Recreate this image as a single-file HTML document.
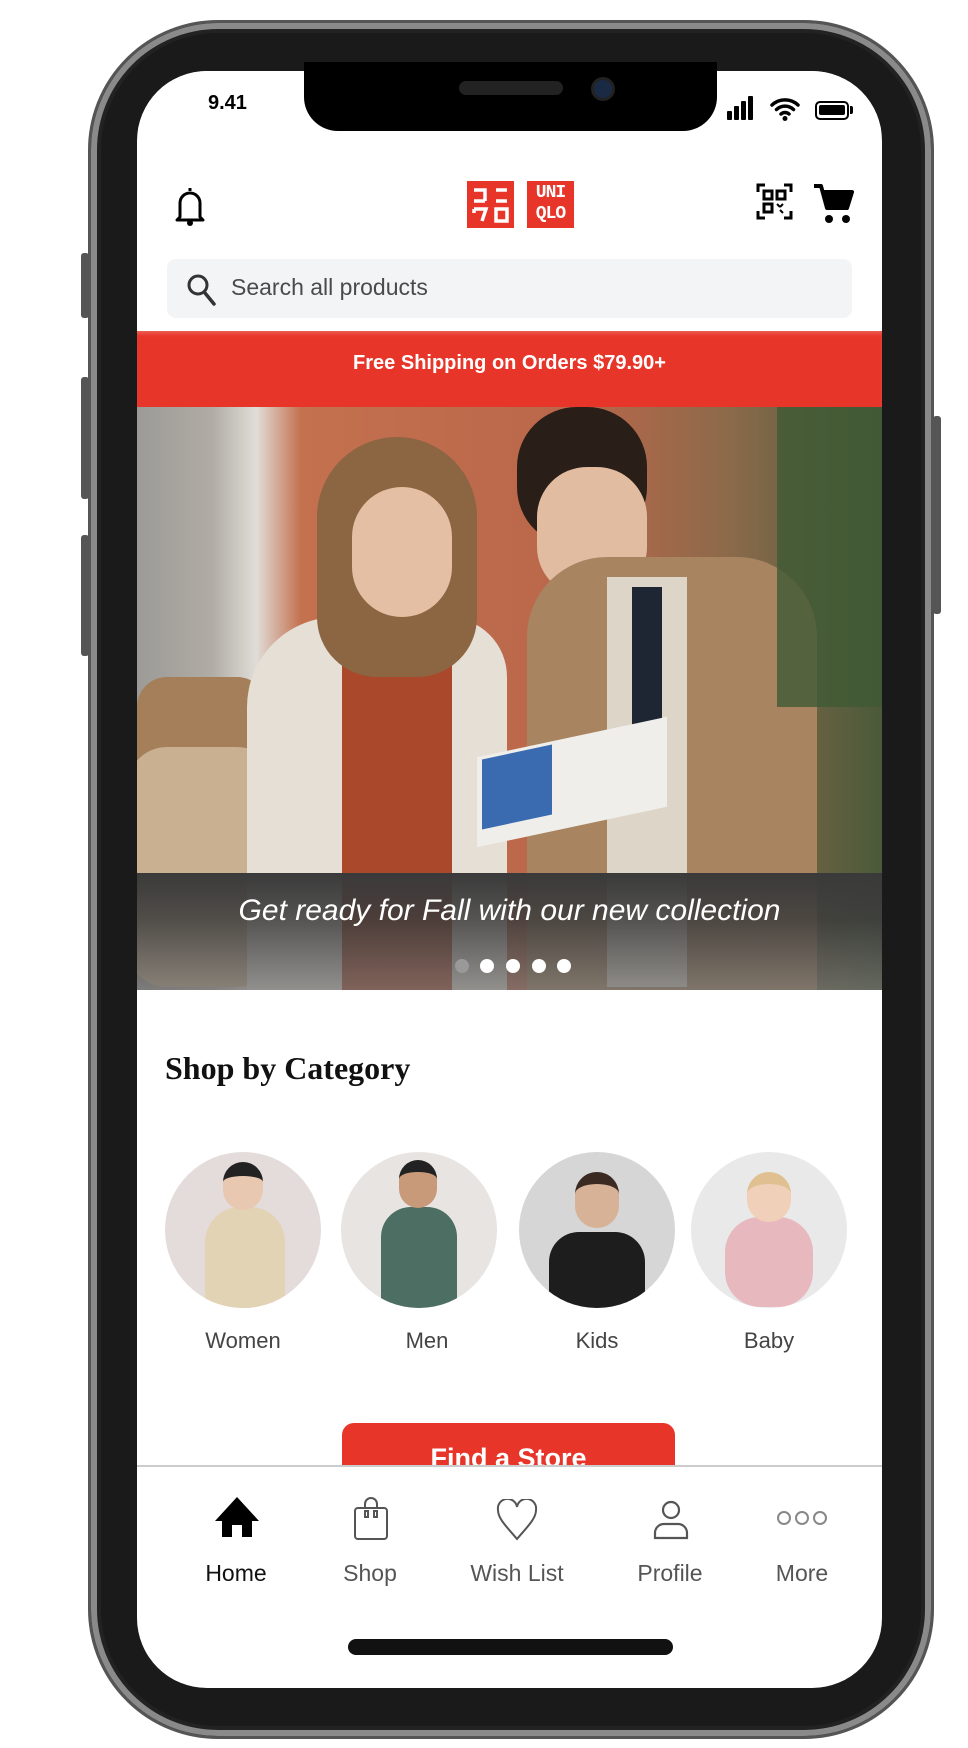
<!DOCTYPE html>
<html><head><meta charset="utf-8"><style>
*{margin:0;padding:0;box-sizing:border-box}
body{width:968px;height:1748px;background:#fff;position:relative;overflow:hidden;font-family:"Liberation Sans",sans-serif}
.abs{position:absolute}
.phone{left:88px;top:20px;width:846px;height:1719px;border-radius:130px;background:#1a1a1a;border:3px solid #555;box-shadow:inset 0 0 0 6px #8a8a8a,inset 0 0 0 10px #222}
.screen{left:137px;top:71px;width:745px;height:1617px;border-radius:70px;background:#fff;overflow:hidden}
.btn{background:#555;border-radius:3px}
.notch{left:304px;top:62px;width:413px;height:69px;background:#000;border-radius:0 0 34px 34px}
.hero{left:137px;top:407px;width:745px;height:583px;overflow:hidden;background:#b9644a}
.cat{position:absolute;top:1152px;width:156px;height:156px;border-radius:50%;overflow:hidden;background:#e4e2e2}
.lab{position:absolute;top:1328px;font-size:22px;color:#444;width:160px;text-align:center}
.nav{position:absolute;top:1560px;font-size:23px;color:#555;width:140px;text-align:center}
</style></head><body>
<div class="abs btn" style="left:81px;top:253px;width:8px;height:65px"></div>
<div class="abs btn" style="left:81px;top:377px;width:8px;height:122px"></div>
<div class="abs btn" style="left:81px;top:535px;width:8px;height:121px"></div>
<div class="abs btn" style="left:933px;top:416px;width:8px;height:198px"></div>
<div class="abs phone"></div>
<div class="abs screen">
  <div class="abs" style="left:0;top:0;width:745px;height:60px;background:#fff"></div>
</div>
<div class="abs notch"></div>
<div class="abs" style="left:459px;top:81px;width:104px;height:14px;border-radius:7px;background:#222"></div>
<div class="abs" style="left:591px;top:77px;width:24px;height:24px;border-radius:50%;background:#1b2a44;border:3px solid #222"></div>
<div class="abs" style="left:208px;top:92px;font-size:20px;font-weight:bold">9.41</div>
<div class="abs" style="left:727px;top:111px;width:5px;height:9px;background:#000;border-radius:1px"></div>
<div class="abs" style="left:734px;top:106px;width:5px;height:14px;background:#000;border-radius:1px"></div>
<div class="abs" style="left:741px;top:101px;width:5px;height:19px;background:#000;border-radius:1px"></div>
<div class="abs" style="left:748px;top:96px;width:5px;height:24px;background:#000;border-radius:1px"></div>
<svg class="abs" style="left:770px;top:96px" width="30" height="26" viewBox="0 0 30 26"><path d="M2 9a19 19 0 0 1 26 0M6.5 13.5a12.5 12.5 0 0 1 17 0M11 18a6 6 0 0 1 8 0" fill="none" stroke="#000" stroke-width="3.5" stroke-linecap="round"/><circle cx="15" cy="22.5" r="2.5"/></svg>
<div class="abs" style="left:815px;top:101px;width:34px;height:19px;border:2.5px solid #000;border-radius:5px"><div style="margin:2px;height:10px;background:#000;border-radius:2px"></div></div>
<div class="abs" style="left:850px;top:106px;width:3px;height:8px;background:#000;border-radius:0 2px 2px 0"></div>

<svg class="abs" style="left:172px;top:185px" width="36" height="42" viewBox="0 0 36 42"><path d="M18 3v3M8 32V18a10 10 0 0 1 20 0v14l3 3H5z" fill="none" stroke="#000" stroke-width="3" stroke-linejoin="round"/><circle cx="18" cy="38" r="3"/></svg>
<div class="abs" style="left:467px;top:181px;width:47px;height:47px;background:#e8352a"></div>
<div class="abs" style="left:527px;top:181px;width:47px;height:47px;background:#e8352a"></div>
<svg class="abs" style="left:467px;top:181px" width="47" height="47" viewBox="0 0 47 47" fill="none" stroke="#fff" stroke-width="3.5"><path d="M7 9h11v11M7 20h11M29 9h11M29 20h11M7 28h12l-4 12M7 28v4M29 28h11v12H29z"/></svg>
<div class="abs" style="left:527px;top:183px;width:47px;text-align:center;color:#fff;font-weight:bold;font-family:'Liberation Mono',monospace;font-size:18px;line-height:21px;letter-spacing:-1px">UNI<br>QLO</div>
<svg class="abs" style="left:756px;top:183px" width="37" height="37" viewBox="0 0 37 37" fill="none" stroke="#000" stroke-width="3"><path d="M2 9V2h7M28 2h7v7M35 28v7h-7M9 35H2v-7"/><rect x="8" y="8" width="8" height="8"/><rect x="21" y="8" width="8" height="8"/><rect x="8" y="21" width="8" height="8"/><path d="M21 21l3 3M27 21l-3 3M24 27l3 3" stroke-width="2"/></svg>
<svg class="abs" style="left:813px;top:183px" width="42" height="42" viewBox="0 0 42 42"><path d="M1 3h7l6 22h20l5-16H11" fill="none" stroke="#000" stroke-width="4" stroke-linejoin="round"/><path d="M11 9h28l-5 16H14z"/><circle cx="16" cy="36" r="4"/><circle cx="33" cy="36" r="4"/></svg>

<div class="abs" style="left:167px;top:259px;width:685px;height:59px;border-radius:9px;background:#f3f4f6"></div>
<svg class="abs" style="left:186px;top:273px" width="32" height="34" viewBox="0 0 32 34"><circle cx="12" cy="12" r="9" fill="none" stroke="#333" stroke-width="3"/><path d="M19 20l9 11" stroke="#333" stroke-width="3.5" stroke-linecap="round"/></svg>
<div class="abs" style="left:231px;top:274px;font-size:23px;color:#4a4a4a">Search all products</div>

<div class="abs" style="left:137px;top:331px;width:745px;height:76px;background:#e8352a;box-shadow:inset 0 4px 4px -2px rgba(255,255,255,.25)"></div>
<div class="abs" style="left:137px;top:352px;width:745px;text-align:center;color:#fff;font-weight:bold;font-size:20px">Free Shipping on Orders $79.90+</div>

<div class="abs hero">
  <div class="abs" style="left:0;top:0;width:745px;height:583px;background:linear-gradient(90deg,#9c9b98 0,#b0aba4 10%,#e0ddd8 16%,#c4714f 22%,#b9664a 60%,#8a6a4a 80%,#4a5a3a 100%)"></div>
  <div class="abs" style="left:0;top:270px;width:130px;height:300px;background:#a57e5a;border-radius:30px"></div>
  <div class="abs" style="left:-10px;top:340px;width:150px;height:240px;background:#c9b090;border-radius:40px"></div>
  <div class="abs" style="left:110px;top:210px;width:260px;height:380px;background:#e5dfd6;border-radius:90px 60px 0 0"></div>
  <div class="abs" style="left:205px;top:215px;width:110px;height:370px;background:#a9482a"></div>
  <div class="abs" style="left:180px;top:30px;width:160px;height:240px;background:#8c6542;border-radius:80px 80px 60px 60px"></div>
  <div class="abs" style="left:215px;top:80px;width:100px;height:130px;background:#e4bfa4;border-radius:50px"></div>
  <div class="abs" style="left:380px;top:0;width:130px;height:140px;background:#2a1e18;border-radius:60px"></div>
  <div class="abs" style="left:400px;top:60px;width:110px;height:130px;background:#e2bca0;border-radius:50px"></div>
  <div class="abs" style="left:390px;top:150px;width:290px;height:440px;background:#a88560;border-radius:80px 80px 0 0"></div>
  <div class="abs" style="left:470px;top:170px;width:80px;height:410px;background:#ddd5c8"></div>
  <div class="abs" style="left:495px;top:180px;width:30px;height:220px;background:#1e2533"></div>
  <div class="abs" style="left:340px;top:330px;width:190px;height:90px;background:#f0eeea;transform:skewY(-12deg)"></div>
  <div class="abs" style="left:345px;top:345px;width:70px;height:70px;background:#3a6ab0;transform:skewY(-12deg)"></div>
  <div class="abs" style="left:640px;top:0;width:105px;height:300px;background:#3f5a34;opacity:.8"></div>
  <div class="abs" style="left:0;top:466px;width:745px;height:117px;background:linear-gradient(#3a3a3a 0,rgba(60,60,60,.85) 40%,rgba(110,110,110,.7) 100%)"></div>
  <div class="abs" style="left:0;top:487px;width:745px;text-align:center;color:#fff;font-style:italic;font-size:30px">Get ready for Fall with our new collection</div>
  <div class="abs" style="left:318px;top:552px;width:14px;height:14px;border-radius:50%;background:#999"></div>
  <div class="abs" style="left:343px;top:552px;width:14px;height:14px;border-radius:50%;background:#fff"></div>
  <div class="abs" style="left:369px;top:552px;width:14px;height:14px;border-radius:50%;background:#fff"></div>
  <div class="abs" style="left:395px;top:552px;width:14px;height:14px;border-radius:50%;background:#fff"></div>
  <div class="abs" style="left:420px;top:552px;width:14px;height:14px;border-radius:50%;background:#fff"></div>
</div>

<div class="abs" style="left:165px;top:1050px;font-family:'Liberation Serif',serif;font-weight:bold;font-size:32px;color:#111">Shop by Category</div>

<div class="cat" style="left:165px;background:#e3dcdb"><div class="abs" style="left:40px;top:55px;width:80px;height:110px;background:#e3d3b5;border-radius:35px 35px 0 0"></div><div class="abs" style="left:58px;top:10px;width:40px;height:48px;background:#e8c8b0;border-top:14px solid #222;border-radius:20px"></div></div>
<div class="cat" style="left:341px;background:#e7e4e2"><div class="abs" style="left:40px;top:55px;width:76px;height:110px;background:#4d6e62;border-radius:30px 30px 0 0"></div><div class="abs" style="left:58px;top:8px;width:38px;height:48px;background:#c99a7a;border-top:12px solid #222;border-radius:20px"></div></div>
<div class="cat" style="left:519px;background:#d6d6d6"><div class="abs" style="left:30px;top:80px;width:96px;height:90px;background:#1d1d1d;border-radius:30px 30px 0 0"></div><div class="abs" style="left:56px;top:20px;width:44px;height:56px;background:#d8b296;border-top:12px solid #3a2a22;border-radius:22px"></div></div>
<div class="cat" style="left:691px;background:#e9e9e9"><div class="abs" style="left:34px;top:65px;width:88px;height:90px;background:#e8b8bf;border-radius:35px"></div><div class="abs" style="left:56px;top:20px;width:44px;height:50px;background:#f0d0b8;border-top:12px solid #e0c090;border-radius:22px"></div></div>
<div class="lab" style="left:163px">Women</div>
<div class="lab" style="left:347px">Men</div>
<div class="lab" style="left:517px">Kids</div>
<div class="lab" style="left:689px">Baby</div>

<div class="abs" style="left:342px;top:1423px;width:333px;height:43px;border-radius:12px 12px 0 0;background:#e8352a;overflow:hidden"><div style="text-align:center;color:#fff;font-weight:bold;font-size:27px;padding-top:20px">Find a Store</div></div>
<div class="abs" style="left:137px;top:1465px;width:745px;height:2px;background:#ccc"></div>

<svg class="abs" style="left:213px;top:1495px" width="48" height="44" viewBox="0 0 48 44"><path d="M24 2L2 26h7v16h10V30h10v12h10V26h7z"/></svg>
<svg class="abs" style="left:352px;top:1497px" width="38" height="44" viewBox="0 0 38 44" fill="none" stroke="#555" stroke-width="2"><rect x="3" y="11" width="32" height="31" rx="3"/><path d="M13 11V7a6 6 0 0 1 12 0v4"/><rect x="13" y="14" width="3" height="6"/><rect x="22" y="14" width="3" height="6"/></svg>
<svg class="abs" style="left:495px;top:1499px" width="44" height="42" viewBox="0 0 44 42"><path d="M22 40C12 28 3 20 3 11a9 9 0 0 1 19-3 9 9 0 0 1 19 3c0 9-9 17-19 29z" fill="none" stroke="#555" stroke-width="2"/></svg>
<svg class="abs" style="left:652px;top:1500px" width="38" height="40" viewBox="0 0 38 40" fill="none" stroke="#555" stroke-width="2.2"><circle cx="19" cy="10" r="8"/><path d="M3 38v-5a9 9 0 0 1 9-9h14a9 9 0 0 1 9 9v5z"/></svg>
<svg class="abs" style="left:775px;top:1508px" width="56" height="20" viewBox="0 0 56 20" fill="none" stroke="#888" stroke-width="2"><circle cx="9" cy="10" r="6"/><circle cx="27" cy="10" r="6"/><circle cx="45" cy="10" r="6"/></svg>
<div class="nav" style="left:166px;color:#111">Home</div>
<div class="nav" style="left:300px">Shop</div>
<div class="nav" style="left:447px">Wish List</div>
<div class="nav" style="left:600px">Profile</div>
<div class="nav" style="left:732px">More</div>
<div class="abs" style="left:348px;top:1639px;width:325px;height:16px;border-radius:8px;background:#111"></div>
</body></html>
